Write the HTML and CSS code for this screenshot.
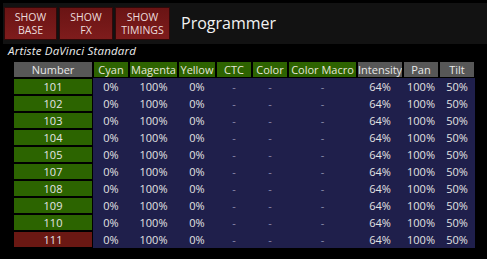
FILE: index.html
```html
<!DOCTYPE html>
<html>
<head>
    <link rel="stylesheet" href="styles.css">
</head>
<body>
    <div class="topbar">
        <button class="btn btn-base" type="button">SHOW<br>BASE</button>
        <button class="btn btn-fx" type="button">SHOW<br>FX</button>
        <button class="btn btn-timings" type="button">SHOW<br>TIMINGS</button>
        <div class="title">Programmer</div>
    </div>

    <div class="fixture-name">Artiste DaVinci Standard</div>

    <table class="prog">
        <colgroup>
            <col style="width: 80px">
            <col style="width: 36px">
            <col style="width: 49px">
            <col style="width: 38px">
            <col style="width: 36px">
            <col style="width: 36px">
            <col style="width: 69px">
            <col style="width: 46px">
            <col style="width: 36px">
            <col style="width: 36px">
        </colgroup>
        <thead>
            <tr>
                <th class="gray">Number</th>
                <th class="green">Cyan</th>
                <th class="green">Magenta</th>
                <th class="green">Yellow</th>
                <th class="green">CTC</th>
                <th class="green">Color</th>
                <th class="green">Color Macro</th>
                <th class="gray">Intensity</th>
                <th class="gray">Pan</th>
                <th class="gray">Tilt</th>
            </tr>
        </thead>
        <tbody id="rows"></tbody>
    </table>

    <script>
        var numeros = [101, 102, 103, 104, 105, 107, 108, 109, 110, 111];
        var corpo = document.getElementById('rows');
        var html = '';
        for (var i = 0; i < numeros.length; i++) {
            var classe = numeros[i] === 111 ? 'num sel' : 'num';
            html += '<tr>' +
                '<td class="' + classe + '">' + numeros[i] + '</td>' +
                '<td>0%</td><td>100%</td><td>0%</td>' +
                '<td class="dash">-</td><td class="dash">-</td><td class="dash">-</td>' +
                '<td>64%</td><td>100%</td><td>50%</td>' +
                '</tr>';
        }
        corpo.innerHTML = html;
    </script>
</body>
</html>
```

FILE: styles.css
```css
body {
    font-family: "Open Sans", "Noto Sans", sans-serif;
    background-color: #000;
    color: #e4e4e4;
    margin: 0;
    padding: 0;
    overflow: hidden;
}
.topbar {
    display: flex;
    align-items: center;
    gap: 2px;
    height: 41px;
    margin: 3px 0 0 3px;
    padding-left: 1px;
    background-color: #121212;
}
.btn {
    height: 33px;
    padding: 0;
    border: 1px solid #300909;
    background: linear-gradient(#6a1414, #7e1c1c);
    color: #ecdcdc;
    font-family: "Open Sans", "Noto Sans", sans-serif;
    font-size: 10.5px;
    line-height: 13px;
}
.btn-base {
    width: 53px;
}
.btn-fx {
    width: 54px;
}
.btn-timings {
    width: 55px;
}
.title {
    margin-left: 9px;
    font-size: 16px;
    color: #f2f2f2;
    padding-bottom: 2px;
}
.fixture-name {
    font-style: italic;
    font-size: 11.5px;
    letter-spacing: 0.2px;
    color: #ececec;
    height: 17px;
    line-height: 13px;
    padding-left: 8px;
}
.prog {
    margin-left: 13px;
    width: 462px;
    table-layout: fixed;
    border-collapse: separate;
    border-spacing: 0;
    font-size: 11px;
}
.prog th,
.prog td {
    box-sizing: border-box;
    height: 17px;
    padding: 0;
    text-align: center;
    vertical-align: middle;
    font-weight: normal;
    white-space: nowrap;
    overflow: hidden;
    line-height: 15px;
}
.prog th {
    border: 1px solid #000;
}
.prog th.green {
    background-color: #2d6300;
    color: #e6e6da;
}
.prog th.gray {
    background-color: #575757;
    color: #e8e8e8;
}
.prog td {
    background-color: #1f1f4b;
    border: 1px solid #1f1f4b;
    color: #e2e2e2;
}
.prog td.num {
    background-color: #2c6400;
    border-color: #000;
    color: #e4e4e4;
}
.prog td.sel {
    background-color: #6a1813;
}
.prog td.dash {
    color: #8c8cac;
}
```
